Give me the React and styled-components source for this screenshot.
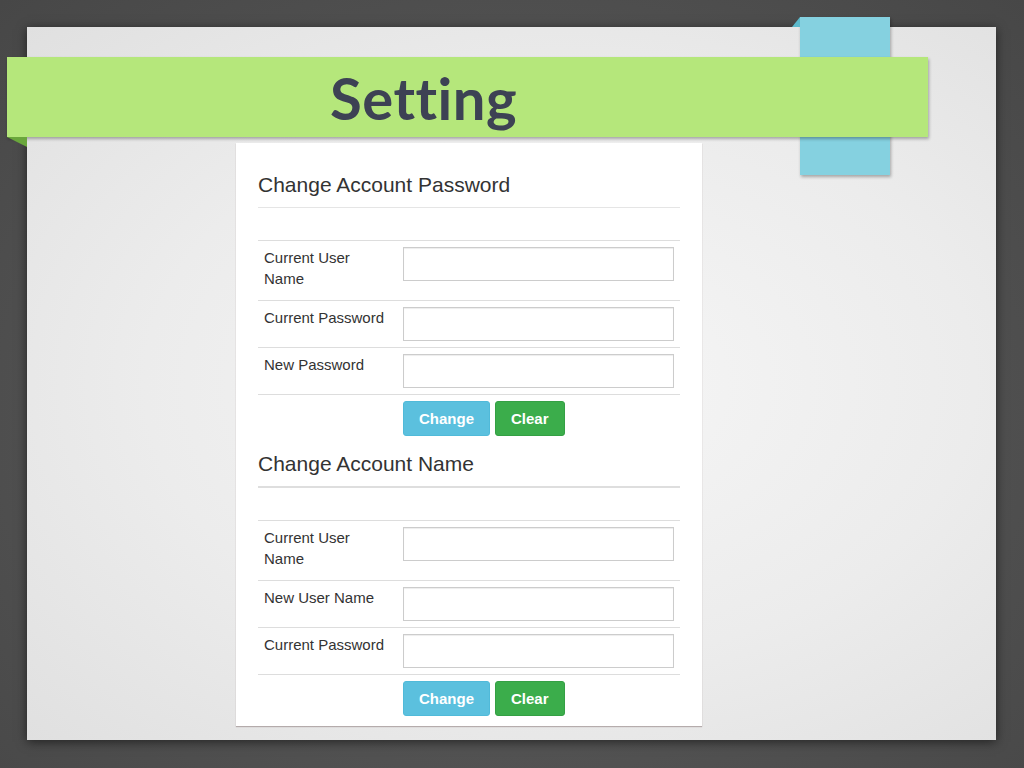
import React from 'react';
import styled, { createGlobalStyle } from 'styled-components';

const GlobalStyle = createGlobalStyle`
  html, body {
    margin: 0;
    padding: 0;
  }
  body {
    background: #4f4f4f;
    font-family: "Liberation Sans", Arial, sans-serif;
  }
  * {
    box-sizing: border-box;
  }
`;

const Stage = styled.div`
  width: 1024px;
  height: 768px;
  padding: 27px 28px 28px 27px;
  background: radial-gradient(ellipse at 50% 55%, #5c5c5c 0%, #525252 55%, #474747 100%);
  overflow: hidden;
`;

const Slide = styled.div`
  position: relative;
  width: 969px;
  height: 713px;
  background: radial-gradient(ellipse at 55% 50%, #f6f6f6 0%, #ececec 55%, #e0e0e0 100%);
  box-shadow: 0 2px 10px rgba(0, 0, 0, 0.55);
  display: flex;
  flex-direction: column;
`;

const Banner = styled.div`
  position: relative;
  z-index: 2;
  margin: 30px 0 0 -20px;
  width: 921px;
  height: 80px;
  padding-left: 323px;
  display: flex;
  align-items: center;
  background: #b5e77b;
  box-shadow: 1px 2px 3px rgba(0, 0, 0, 0.3);

  &::after {
    content: '';
    position: absolute;
    left: 0;
    top: 80px;
    border-top: 10px solid #6aa63c;
    border-left: 20px solid transparent;
  }
`;

const Title = styled.h1`
  margin: 0;
  font-family: Lato, "Open Sans", sans-serif;
  font-weight: 700;
  font-size: 58px;
  color: #3d4254;
  letter-spacing: 0.5px;
`;

const Tab = styled.div`
  position: absolute;
  z-index: 1;
  left: 773px;
  top: -10px;
  width: 90px;
  height: 158px;
  background: #85d1e0;
  box-shadow: 1px 2px 3px rgba(0, 0, 0, 0.3);

  &::before {
    content: '';
    position: absolute;
    left: -8px;
    top: 0;
    border-bottom: 10px solid #5cb9cb;
    border-left: 8px solid transparent;
  }
`;

const Panel = styled.div`
  margin: 6px 0 0 209px;
  width: 466px;
  padding: 0 22px 4px;
  background: #fff;
  box-shadow: 0 1px 1px rgba(120, 100, 100, 0.45);
  color: #333;
`;

const Heading = styled.h3`
  margin: ${p => p.$top}px 0 32px;
  padding-bottom: 11px;
  font-size: 21px;
  font-weight: 400;
  line-height: 23px;
  border-bottom: ${p => p.$thick ? '2px solid #dedede' : '1px solid #e5e5e5'};
`;

const Table = styled.table`
  width: 100%;
  border-collapse: collapse;

  td {
    border-top: 1px solid #dddddd;
    padding: 6px;
    vertical-align: top;
  }

  td:first-child {
    width: 139px;
  }
`;

const Label = styled.label`
  display: block;
  margin-bottom: 5px;
  font-size: 15px;
  line-height: 21px;
  color: #333;
`;

const Input = styled.input`
  display: block;
  width: 100%;
  height: 34px;
  padding: 6px 12px;
  border: 1px solid #cccccc;
  border-radius: 0;
  box-shadow: inset 0 1px 1px rgba(0, 0, 0, 0.075);
  font-size: 14px;
  font-family: inherit;
`;

const Buttons = styled.div`
  display: flex;
  gap: 5px;
`;

const Button = styled.button`
  height: 35px;
  padding: 6px 15px;
  font-family: "Liberation Sans", Arial, sans-serif;
  font-size: 15px;
  font-weight: 700;
  line-height: 21px;
  color: #fff;
  border-radius: 3px;
  border: 1px solid ${p => p.$variant === 'info' ? '#50bad9' : '#34a044'};
  background: ${p => p.$variant === 'info' ? '#5bc0de' : '#3bad4b'};
`;

const FormTable = ({ fields }) => (
  <Table>
    <tbody>
      {fields.map(f => (
        <tr key={f}>
          <td><Label>{f}</Label></td>
          <td><Input type="text" /></td>
        </tr>
      ))}
      <tr>
        <td></td>
        <td>
          <Buttons>
            <Button $variant="info">Change</Button>
            <Button $variant="success">Clear</Button>
          </Buttons>
        </td>
      </tr>
    </tbody>
  </Table>
);

export default function App() {
  return (
    <>
      <GlobalStyle />
      <Stage>
        <Slide>
          <Tab />
          <Banner>
            <Title>Setting</Title>
          </Banner>
          <Panel>
            <Heading $top={30}>Change Account Password</Heading>
            <FormTable fields={['Current User Name', 'Current Password', 'New Password']} />
            <Heading $top={10} $thick>Change Account Name</Heading>
            <FormTable fields={['Current User Name', 'New User Name', 'Current Password']} />
          </Panel>
        </Slide>
      </Stage>
    </>
  );
}
